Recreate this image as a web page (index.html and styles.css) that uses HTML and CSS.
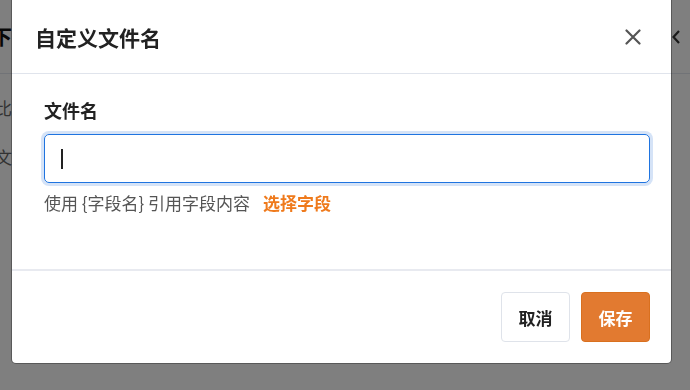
FILE: index.html
```html
<!DOCTYPE html>
<html lang="zh-CN">
<head>
  <meta charset="UTF-8" />
  <meta name="viewport" content="width=device-width, initial-scale=1.0" />
  <title>自定义文件名</title>
  <link rel="stylesheet" href="styles.css">
</head>
<body>
  <div class="page">
    <div class="page-head">
      <div class="clip"><span class="page-title">批量下</span></div>
      <span class="page-back">
        <svg width="10" height="16" viewBox="0 0 10 16"><path d="M8 2 L2.5 8 L8 14" fill="none" stroke="#333" stroke-width="2.2"/></svg>
      </span>
    </div>
    <div class="page-body">
      <div class="clip"><span class="page-row">对比</span></div>
      <div class="clip"><span class="page-row">文</span></div>
    </div>
  </div>

  <div class="mask"></div>

  <div class="dialog">
    <div class="dialog-head">
      <h2>自定义文件名</h2>
      <button class="close" type="button" aria-label="关闭">
        <svg width="16" height="16" viewBox="0 0 16 16"><path d="M1.5 1.5 L14.5 14.5 M14.5 1.5 L1.5 14.5" stroke="#555" stroke-width="2.2" stroke-linecap="round"/></svg>
      </button>
    </div>
    <div class="dialog-body">
      <label class="label">文件名</label>
      <div class="field"><span class="caret"></span></div>
      <p class="hint">使用 {字段名} 引用字段内容 <a class="pick">选择字段</a></p>
    </div>
    <div class="dialog-foot">
      <button class="btn" type="button">取消</button>
      <button class="btn btn-primary" type="button">保存</button>
    </div>
  </div>
</body>
</html>
```

FILE: styles.css
```css
* {
  box-sizing: border-box;
}
body {
  margin: 0;
  font-family: "Noto Sans CJK SC", "Noto Sans", sans-serif;
  background-color: #fff;
  color: #222;
  height: 390px;
  overflow: hidden;
}
.page-head {
  height: 74px;
  border-bottom: 1px solid #e3e6ee;
  display: flex;
  align-items: center;
  justify-content: space-between;
  padding-right: 9px;
}
.clip {
  width: 12px;
  overflow: hidden;
  display: flex;
  justify-content: flex-end;
  white-space: nowrap;
}
.page-title {
  font-size: 20px;
  font-weight: 700;
  color: #111;
}
.page-back {
  display: flex;
}
.page-body {
  padding-top: 22px;
  display: flex;
  flex-direction: column;
  gap: 25px;
}
.page-row {
  font-size: 17px;
  line-height: 24px;
  color: #666;
}
.mask {
  position: fixed;
  inset: 0;
  background: rgba(0, 0, 0, 0.5);
}
.dialog {
  position: fixed;
  left: 12px;
  top: -4px;
  width: 659px;
  background: #fff;
  border-radius: 4px;
  box-shadow: 0 0 0 1px rgba(0, 0, 0, 0.3);
}
.dialog-head {
  height: 78px;
  padding: 4px 30px 0 23px;
  display: flex;
  align-items: center;
  justify-content: space-between;
  border-bottom: 1px solid #e0e4ec;
}
.dialog-head h2 {
  margin: 0;
  font-size: 21px;
  font-weight: 700;
  color: #222;
}
.close {
  border: none;
  background: none;
  padding: 0;
  display: flex;
  cursor: pointer;
}
.dialog-body {
  padding: 23px 21px 55px 32px;
}
.label {
  display: block;
  font-size: 18px;
  font-weight: 600;
  line-height: 26px;
  color: #222;
}
.field {
  margin-top: 11px;
  height: 49px;
  border: 1px solid #1f74e0;
  border-radius: 5px;
  box-shadow: 0 0 0 3px #d5e3f7;
  padding: 0 16px;
  display: flex;
  align-items: center;
}
.caret {
  width: 1.5px;
  height: 20px;
  background: #222;
}
.hint {
  margin: 9px 0 0;
  font-size: 17px;
  line-height: 22px;
  color: #555;
}
.pick {
  margin-left: 9px;
  color: #ef7a1c;
  font-weight: 600;
  cursor: pointer;
}
.dialog-foot {
  border-top: 2px solid #e8eaf0;
  padding: 21px 21px 21px;
  display: flex;
  justify-content: flex-end;
  gap: 11px;
}
.btn {
  width: 69px;
  height: 50px;
  border: 1px solid #dfe3ea;
  border-radius: 4px;
  background: #fff;
  font-family: inherit;
  font-size: 17px;
  font-weight: 600;
  color: #222;
  cursor: pointer;
}
.btn-primary {
  background: #e27a30;
  border-color: #d9701f;
  color: #fff;
}
```
